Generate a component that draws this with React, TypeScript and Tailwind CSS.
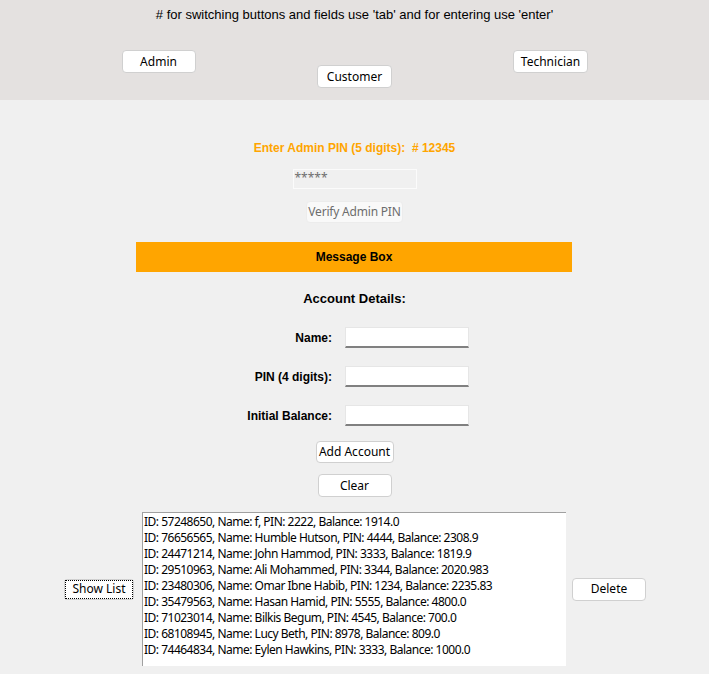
import React from "react";

const seg = { fontFamily: '"Noto Sans", "Open Sans", sans-serif' };
const ari = { fontFamily: '"Liberation Sans", Arial, sans-serif' };

const rows = [
  "ID: 57248650, Name: f, PIN: 2222, Balance: 1914.0",
  "ID: 76656565, Name: Humble Hutson, PIN: 4444, Balance: 2308.9",
  "ID: 24471214, Name: John Hammod, PIN: 3333, Balance: 1819.9",
  "ID: 29510963, Name: Ali Mohammed, PIN: 3344, Balance: 2020.983",
  "ID: 23480306, Name: Omar Ibne Habib, PIN: 1234, Balance: 2235.83",
  "ID: 35479563, Name: Hasan Hamid, PIN: 5555, Balance: 4800.0",
  "ID: 71023014, Name: Bilkis Begum, PIN: 4545, Balance: 700.0",
  "ID: 68108945, Name: Lucy Beth, PIN: 8978, Balance: 809.0",
  "ID: 74464834, Name: Eylen Hawkins, PIN: 3333, Balance: 1000.0",
];

function Btn({ label, w, cls = "" }: { label: string; w: string; cls?: string }) {
  return (
    <div
      className={`${w} h-[23px] bg-white border border-[#d0d0d0] rounded-[4px] flex items-center justify-center text-[12px] text-black leading-none whitespace-nowrap ${cls}`}
      style={seg}
    >
      {label}
    </div>
  );
}

function Field({ label }: { label: string }) {
  return (
    <div className="flex items-center h-[21px]">
      <div className="w-[332px] text-right text-[12px] font-bold text-black" style={ari}>
        {label}
      </div>
      <div className="ml-[13px] w-[124px] h-[21px] bg-white border-b-2 border-[#808080] border-t border-t-[#e6e6e6] border-x border-x-[#e6e6e6]" />
    </div>
  );
}

export default function App() {
  return (
    <div className="w-[709px] h-[674px] bg-[#f0f0f0] overflow-hidden">
      <div className="h-[100px] bg-[#e4e1e0] flex flex-col items-center">
        <div className="mt-[6px] h-[18px] leading-[18px] text-[13px] text-black whitespace-nowrap" style={ari}>
          # for switching buttons and fields use 'tab' and for entering use 'enter'
        </div>
        <div className="w-[588px] grid grid-cols-3 mt-[26px]">
          <div className="flex justify-center">
            <Btn label="Admin" w="w-[74px]" />
          </div>
          <div className="flex justify-center mt-[15px]">
            <Btn label="Customer" w="w-[75px]" />
          </div>
          <div className="flex justify-center">
            <Btn label="Technician" w="w-[75px]" />
          </div>
        </div>
      </div>

      <div className="flex flex-col items-center">
        <div className="mt-[40px] h-[16px] leading-[16px] text-[12px] font-bold text-[#ffa500] whitespace-pre" style={ari}>
          {"Enter Admin PIN (5 digits):  # 12345"}
        </div>
        <div className="mt-[13px] w-[124px] h-[20px] border border-[#fbfbfb] bg-[#f0f0f0] text-[12px] text-[#6d6d6d] leading-[16px] pl-[1px]" style={seg}>
          *****
        </div>
        <div
          className="mt-[12px] w-[97px] h-[22px] bg-[#f9f9f9] border border-[#ececec] rounded-[4px] flex items-center justify-center text-[12px] text-[#6d6d6d] whitespace-nowrap tracking-[-0.2px]"
          style={seg}
        >
          Verify Admin PIN
        </div>
        <div className="mt-[19px] self-start ml-[136px] w-[436px] h-[30px] bg-[#ffa500] flex items-center justify-center text-[12px] font-bold text-black" style={ari}>
          Message Box
        </div>
        <div className="mt-[19px] h-[16px] leading-[16px] text-[13px] font-bold text-black" style={ari}>
          Account Details:
        </div>
      </div>

      <div className="mt-[20px] flex flex-col gap-[18px]">
        <Field label="Name:" />
        <Field label="PIN (4 digits):" />
        <Field label="Initial Balance:" />
      </div>

      <div className="flex flex-col items-center">
        <div
          className="mt-[15px] w-[78px] h-[22px] bg-white border border-[#d0d0d0] rounded-[4px] flex items-center justify-center text-[12px] text-black whitespace-nowrap"
          style={seg}
        >
          Add Account
        </div>
        <div className="mt-[11px]">
          <Btn label="Clear" w="w-[74px]" />
        </div>
      </div>

      <div className="mt-[15px] flex items-center">
        <div className="ml-[64px] w-[70px] h-[21px] bg-white border border-[#d0d0d0] rounded-[3px] flex">
          <div className="flex-1 border border-dotted border-black flex items-center justify-center text-[12px] text-black whitespace-nowrap" style={seg}>
            Show List
          </div>
        </div>
        <div className="ml-[8px] w-[424px] h-[154px] bg-white border-t border-l border-[#a0a0a0] pt-[1px]">
          {rows.map((r) => (
            <div key={r} className="h-[16px] leading-[16px] text-[12px] text-black whitespace-nowrap pl-[1px] tracking-[-0.5px]" style={seg}>
              {r}
            </div>
          ))}
        </div>
        <div className="ml-[6px]">
          <Btn label="Delete" w="w-[74px]" />
        </div>
      </div>
    </div>
  );
}
